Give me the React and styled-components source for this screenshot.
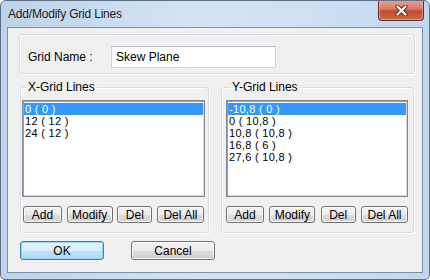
import React from 'react'
import styled, {createGlobalStyle} from 'styled-components'

const Global = createGlobalStyle`
  html, body {
    margin: 0;
    padding: 0;
    background: #ffffff;
  }
  body {
    font-family: 'Liberation Sans', Arial, sans-serif;
    font-size: 12px;
    color: #000;
  }
`

const Window = styled.div`
  box-sizing: border-box;
  width: 430px;
  height: 280px;
  border: 1px solid #5f6f82;
  border-radius: 6px 6px 5px 5px;
  padding: 0 6px 6px 6px;
  background: linear-gradient(to right, #bdd3eb 0%, #d3e3f3 45%, #cfe0f2 70%, #c2d7ee 100%);
  display: flex;
  flex-direction: column;
  overflow: hidden;
`

const TitleBar = styled.div`
  height: 26px;
  display: flex;
  align-items: center;
  justify-content: space-between;
`

const Title = styled.div`
  font-size: 12px;
  color: #1b1b1b;
  padding-left: 1px;
  letter-spacing: -0.2px;
`

const CloseButton = styled.div`
  align-self: flex-start;
  box-sizing: border-box;
  width: 46px;
  height: 21px;
  margin-top: -1px;
  margin-right: -1px;
  border: 1px solid #6e2b21;
  border-top: none;
  border-radius: 0 0 4px 4px;
  background: linear-gradient(#e3a595 0%, #d67a63 45%, #c24a30 55%, #cf6a4c 100%);
  box-shadow: inset 0 0 0 1px rgba(255, 210, 200, 0.45);
  display: flex;
  align-items: center;
  justify-content: center;
`

const Client = styled.div`
  flex: 1;
  border: 1px solid #7d8fa5;
  background: #f0f0f0;
  padding: 6px 7px 0 11px;
  display: flex;
  flex-direction: column;
`

const NameFrame = styled.div`
  box-sizing: border-box;
  height: 40px;
  border: 1px solid #d5dfe5;
  border-radius: 3px;
  box-shadow: inset 1px 1px 0 #fff, 1px 1px 0 #fff;
  display: flex;
  align-items: flex-start;
  padding: 11px 0 0 8px;
`

const Label = styled.div`
  width: 83px;
  line-height: 22px;
  height: 22px;
`

const TextInput = styled.div`
  box-sizing: border-box;
  width: 165px;
  height: 22px;
  background: #fff;
  border: 1px solid #d2d6dc;
  border-top-color: #b9bec6;
  padding-left: 4px;
  line-height: 20px;
`

const GroupRow = styled.div`
  display: flex;
  gap: 12px;
  margin-top: 6px;
  padding-left: 1px;
`

const Group = styled.fieldset`
  box-sizing: border-box;
  width: ${p => p.$width}px;
  margin: 0;
  border: 1px solid #d5dfe5;
  border-radius: 3px;
  box-shadow: inset 1px 1px 0 #fff, 1px 1px 0 #fff;
  padding: 6px ${p => p.$right}px 9px ${p => p.$left}px;
  display: flex;
  flex-direction: column;
`

const Legend = styled.legend`
  line-height: 14px;
  padding: 0 2px;
  margin-left: 4px;
  font-size: 12px;
`

const ListBox = styled.div`
  box-sizing: border-box;
  height: 97px;
  background: #fff;
  border: 1px solid #828790;
  box-shadow: inset 1px 1px 0 #a0a0a0, inset -1px -1px 0 #d8d8d8;
  padding: 2px 1px;
`

const Item = styled.div`
  height: 12px;
  line-height: 12px;
  font-size: 11px;
  letter-spacing: 0.3px;
  padding-left: ${p => p.$indent}px;
  white-space: pre;
  background: ${p => (p.$selected ? '#3399ff' : 'transparent')};
  color: ${p => (p.$selected ? '#fff' : '#000')};
`

const ButtonRow = styled.div`
  display: flex;
  justify-content: space-between;
  margin-top: 9px;
  padding: 0 ${p => p.$pad}px;
`

const Button = styled.div`
  box-sizing: border-box;
  width: ${p => p.$width}px;
  height: ${p => p.$height || 17}px;
  border: 1px solid ${p => (p.$default ? '#3c7fb1' : '#707070')};
  border-radius: 3px;
  background: ${p =>
    p.$default
      ? 'linear-gradient(#e5f4fc 0%, #d6eefb 50%, #bde5fb 50%, #a9daf4 100%)'
      : 'linear-gradient(#f2f2f2 0%, #ebebeb 50%, #dddddd 50%, #cfcfcf 100%)'};
  box-shadow: inset 0 0 0 1px ${p => (p.$default ? '#98d4f2' : '#fcfcfc')};
  display: flex;
  align-items: center;
  justify-content: center;
  font-size: 12px;
  color: #000;
`

const Footer = styled.div`
  display: flex;
  gap: 27px;
  margin-top: 8px;
  padding-left: 1px;
`

const xLines = ['0 ( 0 )', '12 ( 12 )', '24 ( 12 )']
const yLines = ['-10,8 ( 0 )', '0 ( 10,8 )', '10,8 ( 10,8 )', '16,8 ( 6 )', '27,6 ( 10,8 )']

const CloseIcon = () => (
  <svg width="13" height="11" viewBox="0 0 13 11">
    <path d="M2.5 1.5 L10.5 9.5 M10.5 1.5 L2.5 9.5" stroke="#5a2418" strokeWidth="4" strokeLinecap="round" />
    <path d="M2.5 1.5 L10.5 9.5 M10.5 1.5 L2.5 9.5" stroke="#ffffff" strokeWidth="2.2" strokeLinecap="round" />
  </svg>
)

const GridGroup = ({title, items, width, left, right, buttons, pad, indent}) => (
  <Group $width={width} $left={left} $right={right}>
    <Legend>{title}</Legend>
    <ListBox>
      {items.map((it, i) => (
        <Item key={it} $selected={i === 0} $indent={indent}>
          {it}
        </Item>
      ))}
    </ListBox>
    <ButtonRow $pad={pad}>
      {buttons.map(([label, w]) => (
        <Button key={label} $width={w}>
          {label}
        </Button>
      ))}
    </ButtonRow>
  </Group>
)

const App = () => (
  <>
    <Global />
    <Window>
      <TitleBar>
        <Title>Add/Modify Grid Lines</Title>
        <CloseButton>
          <CloseIcon />
        </CloseButton>
      </TitleBar>
      <Client>
        <NameFrame>
          <Label>Grid Name :</Label>
          <TextInput>Skew Plane</TextInput>
        </NameFrame>
        <GroupRow>
          <GridGroup
            title="X-Grid Lines"
            items={xLines}
            width={189}
            left={1}
            right={3}
            pad={1}
            indent={1}
            buttons={[['Add', 39], ['Modify', 46], ['Del', 35], ['Del All', 47]]}
          />
          <GridGroup
            title="Y-Grid Lines"
            items={yLines}
            width={193}
            left={4}
            right={5}
            pad={0}
            indent={1}
            buttons={[['Add', 38], ['Modify', 46], ['Del', 35], ['Del All', 47]]}
          />
        </GroupRow>
        <Footer>
          <Button $width={84} $height={19} $default>
            OK
          </Button>
          <Button $width={84} $height={19}>
            Cancel
          </Button>
        </Footer>
      </Client>
    </Window>
  </>
)

export default App
